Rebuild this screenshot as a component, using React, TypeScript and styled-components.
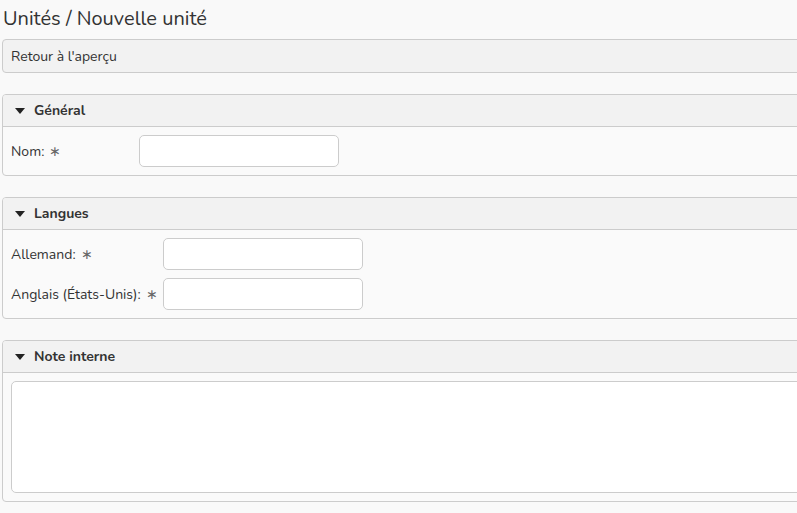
import styled, { createGlobalStyle } from "styled-components";

const GlobalStyle = createGlobalStyle`
	html, body {
		margin: 0;
		padding: 0;
		background: #f9f9f9;
		overflow: hidden;
	}
	body {
		font-family: "Nunito", Lato, "Noto Sans", sans-serif;
		color: #333;
	}
`;

const Page = styled.div`
	width: 820px;
	padding: 0 0 0 2px;
`;

const Title = styled.h1`
	margin: 0;
	padding: 5px 0 0 1px;
	height: 39px;
	box-sizing: border-box;
	font-size: 20px;
	font-weight: 400;
	color: #333;
`;

const BackBar = styled.div`
	display: flex;
	align-items: center;
	height: 34px;
	box-sizing: border-box;
	padding: 0 8px;
	border: 1px solid #ccc;
	border-radius: 4px;
	background: #f2f2f2;
	font-size: 14px;
	margin-bottom: 21px;
`;

const Panel = styled.section`
	border: 1px solid #ccc;
	border-radius: 4px;
	background: #fafafa;
	margin-bottom: 21px;
	overflow: hidden;
`;

const PanelHeader = styled.div`
	display: flex;
	align-items: center;
	gap: 9px;
	height: 32px;
	box-sizing: border-box;
	padding: 0 12px;
	background: #f2f2f2;
	border-bottom: 1px solid #ccc;
	font-size: 14px;
	font-weight: 700;
	color: #333;
`;

const Caret = styled.span`
	width: 0;
	height: 0;
	border-left: 5px solid transparent;
	border-right: 5px solid transparent;
	border-top: 6px solid #222;
	margin-top: 1px;
`;

const PanelBody = styled.div`
	padding: 8px;
	display: flex;
	flex-direction: column;
	gap: 8px;
`;

const FieldRow = styled.div<{ labelWidth: number }>`
	display: grid;
	grid-template-columns: ${(p) => p.labelWidth}px 200px;
	align-items: center;
`;

const Label = styled.label`
	font-size: 14px;
	color: #333;
	white-space: nowrap;
`;

const Required = styled.span`
	color: #666;
	margin-left: 5px;
`;

const TextInput = styled.input`
	height: 32px;
	width: 200px;
	box-sizing: border-box;
	border: 1px solid #ccc;
	border-radius: 5px;
	background: #fff;
	outline: none;
`;

const NoteArea = styled.textarea`
	display: block;
	width: 100%;
	height: 112px;
	box-sizing: border-box;
	border: 1px solid #ccc;
	border-radius: 5px;
	background: #fff;
	resize: none;
	outline: none;
`;

function Section({ title, children }: any) {
	return (
		<Panel>
			<PanelHeader>
				<Caret />
				{title}
			</PanelHeader>
			<PanelBody>{children}</PanelBody>
		</Panel>
	);
}

function Field({ label, labelWidth }: any) {
	return (
		<FieldRow labelWidth={labelWidth}>
			<Label>
				{label}:<Required>∗</Required>
			</Label>
			<TextInput type="text" />
		</FieldRow>
	);
}

export default function App() {
	return (
		<>
			<GlobalStyle />
			<Page>
				<Title>Unités / Nouvelle unité</Title>
				<BackBar>Retour à l'aperçu</BackBar>
				<Section title="Général">
					<Field label="Nom" labelWidth={128} />
				</Section>
				<Section title="Langues">
					<Field label="Allemand" labelWidth={152} />
					<Field label="Anglais (États-Unis)" labelWidth={152} />
				</Section>
				<Section title="Note interne">
					<NoteArea />
				</Section>
			</Page>
		</>
	);
}
